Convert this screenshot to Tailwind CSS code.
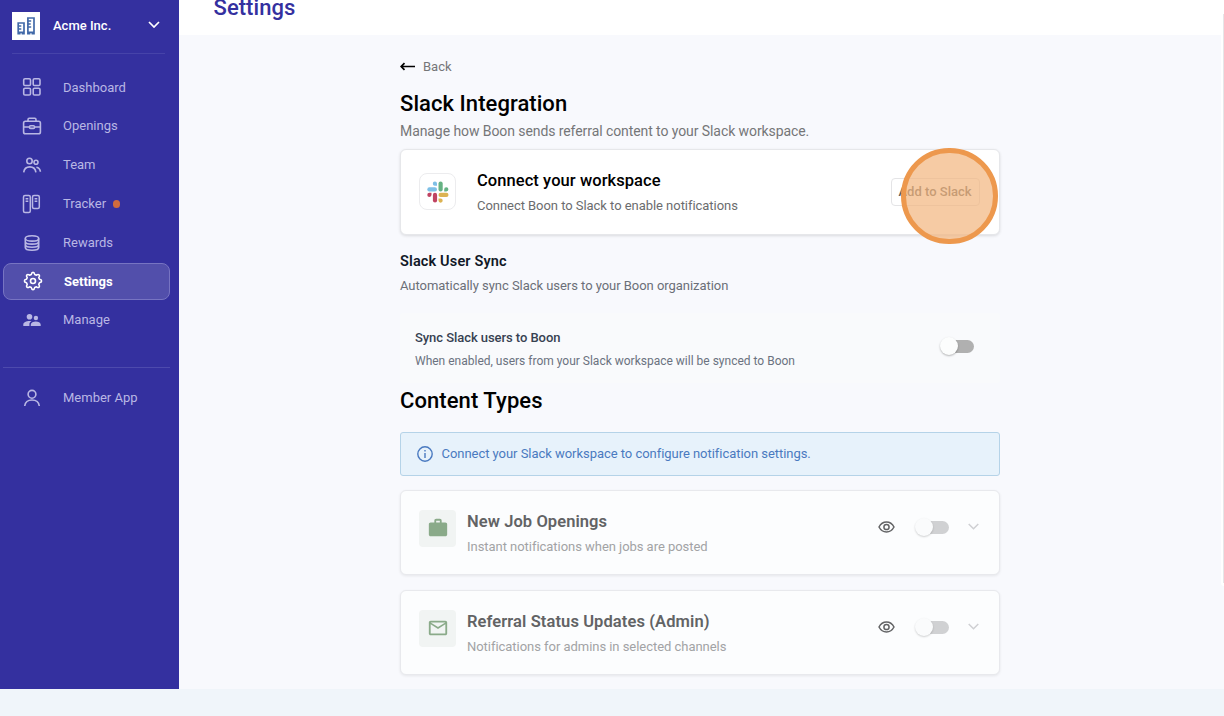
<!DOCTYPE html>
<html lang="en">
<head>
<meta charset="utf-8">
<title>Settings</title>
<script src="https://cdn.jsdelivr.net/npm/@tailwindcss/browser@4"></script>
</head>
<body class="relative h-[716px] w-[1224px] overflow-hidden bg-[#f0f5fa] font-[Roboto,sans-serif] text-black">
<div class="flex h-[689px]">
  <aside class="h-full w-[178.5px] shrink-0 bg-[#34309f] text-[13px] text-[#b9b7e4]">
    <div class="flex h-[53px] items-center pl-3 pr-[19px]">
      <div class="mt-[-2px] flex size-7 items-center justify-center bg-white">
        <svg class="size-7" viewBox="0 0 28 28" fill="none" stroke="#4169a8" stroke-width="1.700"><path d="M6.200 11h5.800v10.600h-1.500v-1.300H7.700v1.300H6.200zM15.900 6h6.100v15.600h-1.600v-1.300h-2.900v1.300h-1.600zM6.500 14h2.800M6.500 17h2.800M16.200 9h3M16.200 12h2.500M16.200 15h3"/></svg>
      </div>
      <span class="ml-[13px] mt-[-1px] font-medium text-white">Acme Inc.</span>
      <svg class="ml-auto mt-[-4px] h-[7px] w-3" viewBox="0 0 12 7" fill="none" stroke="#fff" stroke-width="1.700"><path d="m1 1 5 5 5-5"/></svg>
    </div>
    <div class="ml-3 mr-3.5 h-px bg-[#4643a9]"></div>
    <nav class="mt-[14px] flex flex-col">
      <a class="flex h-[38.8px] items-center pl-[22px]"><svg class="size-5" viewBox="0 0 20 20" fill="none" stroke="currentColor" stroke-width="1.600"><rect x="1.700" y="1.700" width="6.800" height="6.800" rx="1.300"/><rect x="11.200" y="1.700" width="6.800" height="6.800" rx="1.300"/><rect x="1.700" y="11.200" width="6.800" height="6.800" rx="1.300"/><rect x="11.200" y="11.200" width="6.800" height="6.800" rx="1.300"/></svg><span class="ml-[21px]">Dashboard</span></a>
      <a class="flex h-[38.8px] items-center pl-[22px]"><svg class="size-5" viewBox="0 0 20 20" fill="none" stroke="currentColor" stroke-width="1.600"><rect x="1.600" y="5.300" width="16.800" height="12.500" rx="1.800"/><path d="M6 5V3.700Q6 2.300 7.200 2.300h5.600Q14 2.300 14 3.700V5M1.600 11H7.500M12.500 11h5.900"/><rect x="7.500" y="9.800" width="5" height="2.600" rx="1"/></svg><span class="ml-[21px]">Openings</span></a>
      <a class="flex h-[38.8px] items-center pl-[22px]"><svg class="size-5" viewBox="0 0 20 20" fill="none" stroke="currentColor" stroke-width="1.600"><circle cx="7.500" cy="6" r="2.700"/><circle cx="14" cy="7.200" r="2"/><path d="M1.700 17.300c.4-3.300 2.800-5.400 6.100-5.400s5.700 2.100 6.100 5.400M14.400 12.200c2.300.4 3.800 2.200 4 4.600"/></svg><span class="ml-[21px]">Team</span></a>
      <a class="flex h-[38.8px] items-center pl-[22px]"><svg class="size-5" viewBox="0 0 20 20" fill="none" stroke="currentColor" stroke-width="1.500"><rect x="1.500" y="1.500" width="6.800" height="17" rx="1.500"/><rect x="10.500" y="1.500" width="6.800" height="13" rx="1.500"/><path d="M3.600 4.700h2.700M3.600 7.200h2.700M12.600 4.700h2.700M12.600 7.200h2.700"/></svg><span class="ml-[21px]">Tracker</span><span class="ml-[6.500px] size-[7.500px] rounded-full bg-[#cf6b3d]"></span></a>
      <a class="flex h-[38.8px] items-center pl-[22px]"><svg class="size-5" viewBox="0 0 20 20" fill="none" stroke="currentColor" stroke-width="1.600"><ellipse cx="10" cy="5.400" rx="6.700" ry="2.700"/><path d="M3.300 5.400v9.100c0 1.500 3 2.700 6.700 2.700s6.700-1.200 6.700-2.700V5.400M3.300 8.400c0 1.500 3 2.700 6.700 2.700s6.700-1.200 6.700-2.700M3.300 11.500c0 1.500 3 2.700 6.700 2.700s6.700-1.200 6.700-2.700"/></svg><span class="ml-[21px]">Rewards</span></a>
      <a class="ml-[3px] mr-[9px] my-[0.700px] flex h-[37.400px] items-center rounded-lg border border-[#7774c2] bg-[#524fab] pl-[19px] font-bold text-white"><svg class="size-5" viewBox="0 0 20 20" fill="none" stroke="currentColor" stroke-width="1.600" stroke-linejoin="round"><path d="M10.0 1.400Q11.400 1.400 11.700 3.500L13.400 4.200Q15.100 2.900 16.100 3.900Q17.100 4.900 15.800 6.600L16.500 8.300Q18.600 8.600 18.600 10Q18.600 11.400 16.500 11.700L15.800 13.400Q17.100 15.100 16.100 16.100Q15.100 17.100 13.400 15.800L11.700 16.500Q11.400 18.600 10 18.600Q8.600 18.600 8.300 16.500L6.600 15.800Q4.900 17.100 3.900 16.100Q2.900 15.100 4.200 13.400L3.500 11.700Q1.400 11.400 1.400 10Q1.400 8.600 3.500 8.300L4.200 6.600Q2.900 4.900 3.900 3.900Q4.900 2.900 6.600 4.200L8.300 3.500Q8.600 1.400 10 1.400Z"/><circle cx="10" cy="10" r="2.500"/></svg><span class="ml-[21px]">Settings</span></a>
      <a class="flex h-[38.8px] items-center pl-[22px]"><svg class="size-5" viewBox="0 0 20 20" fill="currentColor"><circle cx="7.500" cy="6.800" r="2.800"/><circle cx="13.900" cy="8" r="2.200"/><path d="M1.300 16v-1.700c0-2.100 3-3.400 6.200-3.400.8 0 1.400 0 2 .2-1.400 1-2.100 2-2.100 3.200V16zM8.800 16v-1.500c0-1.900 2.600-2.900 5-2.900s4.900 1 4.900 2.900V16z"/></svg><span class="ml-[21px]">Manage</span></a>
    </nav>
    <div class="ml-[3px] mr-[9px] mt-[27.500px] h-px bg-[#4d4aad]"></div>
    <a class="mt-[10px] flex h-[39px] items-center pl-[22px]"><svg class="size-5" viewBox="0 0 20 20" fill="none" stroke="currentColor" stroke-width="1.600"><circle cx="10" cy="6.300" r="3.900"/><path d="M2.700 18c.5-4 3.300-6 7.300-6s6.800 2 7.300 6"/></svg><span class="ml-[21px] mt-px">Member App</span></a>
  </aside>

  <main class="flex min-w-0 flex-1 flex-col bg-[#f8f9fd]">
    <header class="h-[35px] shrink-0 bg-white pl-[35px]">
      <h1 class="mt-[-7px] text-[22px] font-medium leading-[30px] tracking-[0.060px] text-[#34309f]">Settings</h1>
    </header>
    <div class="ml-[221.500px] w-[599.500px]">
      <div class="mt-[21px] flex h-5 items-center text-[13px] text-[#757678]"><svg class="h-[9px] w-[15px]" viewBox="0 0 15 9" fill="none" stroke="#000" stroke-width="1.700"><path d="M15 4.500H1.500M4.500 1.200 1.200 4.500l3.300 3.300"/></svg><span class="ml-2 mt-px">Back</span></div>
      <h2 class="mt-[13px] text-[22px] font-medium leading-[30px] tracking-[0.060px]">Slack Integration</h2>
      <p class="mt-0.5 text-[14px] leading-5 tracking-[-0.080px] text-[#757678]">Manage how Boon sends referral content to your Slack workspace.</p>
      <section class="mt-2 flex h-[86px] items-center rounded-md border border-[#e6e7ea] bg-white pl-[18px] pr-[19px] shadow-[0_1px_3px_rgba(0,0,0,0.12)]">
        <div class="mt-[-1px] flex size-[37px] items-center justify-center rounded-lg border border-[#ececee]">
          <svg class="size-[22px]" viewBox="0 0 22 22"><g fill="#7dbfe6"><rect x="0.300" y="6.300" width="9.700" height="4.200" rx="2.100"/><path d="M10 4.800H8A2.100 2.100 0 1 1 10 2.700z"/></g><g fill="#66b283"><rect x="11.500" y=".5" width="4.200" height="10" rx="2.100"/><path d="M17.200 10.500V8.500a2.100 2.100 0 1 1 2.100 2z"/></g><g fill="#dcb352"><rect x="11.500" y="11.800" width="10" height="4.200" rx="2.100"/><path d="M11.500 17.500h2a2.100 2.100 0 1 1-2 2.100z"/></g><g fill="#c04362"><rect x="5.900" y="11.800" width="4.200" height="9.800" rx="2.100"/><path d="M4.500 11.800v2a2.100 2.100 0 1 1-2.100-2z"/></g></svg>
        </div>
        <div class="ml-[21px]">
          <h3 class="text-[16.500px] font-medium leading-6 tracking-[0.070px]">Connect your workspace</h3>
          <p class="mt-[3px] text-[13px] leading-5 tracking-[-0.045px] text-[#6b6c6e]">Connect Boon to Slack to enable notifications</p>
        </div>
        <button class="ml-auto h-7 w-[89px] whitespace-nowrap rounded border border-[#e4e4e6] text-[13px] font-medium text-[#606060]">Add to Slack</button>
      </section>
      <h3 class="mt-[17px] text-[14.500px] font-semibold leading-5 tracking-[0.150px] text-[#111827]">Slack User Sync</h3>
      <p class="mt-1 text-[13px] leading-5 tracking-[-0.040px] text-[#6b6f78]">Automatically sync Slack users to your Boon organization</p>
      <section class="mt-[17px] flex h-[70px] items-center rounded bg-[#f9fafc] pl-[15px] pr-[26px]">
        <div class="mt-0.5">
          <h4 class="text-[13px] font-medium leading-5 tracking-[-0.060px] text-[#374151]">Sync Slack users to Boon</h4>
          <p class="mt-[3px] text-[12px] leading-5 text-[#6b7280]">When enabled, users from your Slack workspace will be synced to Boon</p>
        </div>
        <div class="ml-auto mt-[-4px] flex h-[18px] w-[34px] items-center rounded-full"><span class="z-10 size-[18px] shrink-0 rounded-full bg-[#fcfdfd] shadow-[0_1px_2px_rgba(0,0,0,0.28)]"></span><span class="-ml-2 h-[13px] w-6 rounded-r-full bg-[#b0b0b0]"></span></div>
      </section>
      <h2 class="mt-[3px] text-[22px] font-medium leading-[30px] tracking-[0.080px]">Content Types</h2>
      <div class="mt-4 flex h-11 items-center rounded-[3px] border border-[#b5d3e8] bg-[#e7f2fb] pl-4 text-[13px] tracking-[-0.040px] text-[#4a7ac0]"><svg class="size-4" viewBox="0 0 16 16" fill="none" stroke="currentColor" stroke-width="1.400"><circle cx="8" cy="8" r="7.200"/><path d="M8 7v5M8 4v1.600"/></svg><span class="ml-[8.500px]">Connect your Slack workspace to configure notification settings.</span></div>
      <section class="mt-[14px] flex h-[85px] items-center rounded-md border border-[#e8e9ed] bg-[#fcfdfe] pl-[18px] pr-[20px] shadow-[0_1px_3px_rgba(0,0,0,0.08)]">
        <div class="mt-[-9px] flex size-[37px] items-center justify-center rounded bg-[#f1f4f3]"><svg class="size-[22px]" viewBox="0 0 24 24" fill="#8aaa89"><path d="M20 6h-4V4c0-1.110-.89-2-2-2h-4c-1.110 0-2 .89-2 2v2H4c-1.110 0-1.990.89-1.990 2L2 19c0 1.110.89 2 2 2h16c1.110 0 2-.89 2-2V8c0-1.110-.89-2-2-2m-6 0h-4V4h4z"/></svg></div>
        <div class="ml-[11px] mt-px"><h3 class="text-[16.500px] font-semibold leading-6 tracking-[0.080px] text-[#626365]">New Job Openings</h3><p class="mt-[3px] text-[13px] leading-5 tracking-[-0.040px] text-[#a2a3a5]">Instant notifications when jobs are posted</p></div>
        <div class="ml-auto mt-[-11px] flex items-center"><svg class="h-3 w-[17px]" viewBox="0 0 17 12" fill="none" stroke="#626365" stroke-width="1.500"><path d="M1 6C4.500-.6 12.500-.6 16 6c-3.500 6.600-11.500 6.600-15 0Z"/><circle cx="8.500" cy="6" r="2.600"/></svg>
        <div class="ml-[20px] flex w-[34px] items-center"><span class="z-10 size-[18px] shrink-0 rounded-full bg-[#fafbfc] shadow-[0_1px_2px_rgba(0,0,0,0.18)]"></span><span class="-ml-2 h-[13px] w-6 rounded-r-full bg-[#d0d1d3]"></span></div>
        <svg class="ml-[19px] mt-[-2px] h-[7px] w-[11px]" viewBox="0 0 11 7" fill="none" stroke="#cfd0d3" stroke-width="1.500"><path d="m.7 1 4.800 4.800L10.300 1"/></svg></div>
      </section>
      <section class="mt-[15px] flex h-[85px] items-center rounded-md border border-[#e8e9ed] bg-[#fcfdfe] pl-[18px] pr-[20px] shadow-[0_1px_3px_rgba(0,0,0,0.08)]">
        <div class="mt-[-9px] flex size-[37px] items-center justify-center rounded bg-[#f1f4f3]"><svg class="size-[22px]" viewBox="0 0 24 24" fill="#8aaa89"><path d="M22 6c0-1.100-.9-2-2-2H4c-1.100 0-2 .9-2 2v12c0 1.100.9 2 2 2h16c1.100 0 2-.9 2-2zm-2 0-8 5-8-5zm0 12H4V8l8 5 8-5z"/></svg></div>
        <div class="ml-[11px] mt-px"><h3 class="text-[16.500px] font-semibold leading-6 tracking-[0.100px] text-[#626365]">Referral Status Updates (Admin)</h3><p class="mt-[3px] text-[13px] leading-5 tracking-[-0.040px] text-[#a2a3a5]">Notifications for admins in selected channels</p></div>
        <div class="ml-auto mt-[-11px] flex items-center"><svg class="h-3 w-[17px]" viewBox="0 0 17 12" fill="none" stroke="#626365" stroke-width="1.500"><path d="M1 6C4.500-.6 12.500-.6 16 6c-3.500 6.600-11.500 6.600-15 0Z"/><circle cx="8.500" cy="6" r="2.600"/></svg>
        <div class="ml-[20px] flex w-[34px] items-center"><span class="z-10 size-[18px] shrink-0 rounded-full bg-[#fafbfc] shadow-[0_1px_2px_rgba(0,0,0,0.18)]"></span><span class="-ml-2 h-[13px] w-6 rounded-r-full bg-[#d0d1d3]"></span></div>
        <svg class="ml-[19px] mt-[-2px] h-[7px] w-[11px]" viewBox="0 0 11 7" fill="none" stroke="#cfd0d3" stroke-width="1.500"><path d="m.7 1 4.800 4.800L10.300 1"/></svg></div>
      </section>
    </div>
  </main>
</div>
<div class="absolute right-0 top-0 flex h-[586px] w-[3px] justify-end rounded-bl bg-white"><span class="mb-[3px] mt-3.5 w-px bg-[#e6e6e8]"></span></div>
<div class="absolute left-[901px] top-[147.500px] size-[96.500px] rounded-full border-[5px] border-[#ed984d] bg-[#f2b57e]/70"></div>
</body>
</html>
